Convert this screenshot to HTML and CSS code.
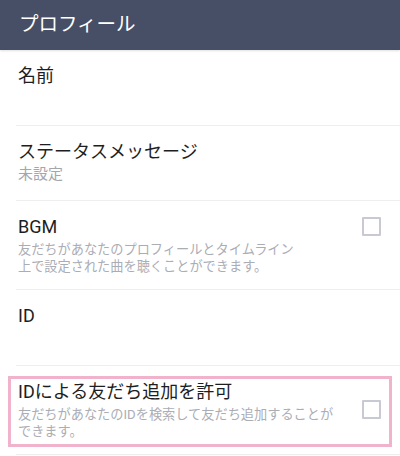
FILE: index.html
```html
<!DOCTYPE html>
<html lang="ja">
<head>
<meta charset="utf-8">
<title>プロフィール</title>
<link rel="stylesheet" href="styles.css">
</head>
<body>
<header class="appbar">
  <h1 class="appbar-title">プロフィール</h1>
</header>
<main class="list">
  <section class="row row-tall">
    <div class="row-text">
      <div class="row-title">名前</div>
    </div>
  </section>
  <section class="row">
    <div class="row-text">
      <div class="row-title">ステータスメッセージ</div>
      <div class="row-value">未設定</div>
    </div>
  </section>
  <section class="row">
    <div class="row-text">
      <div class="row-title">BGM</div>
      <div class="row-desc">友だちがあなたのプロフィールとタイムライン<br>上で設定された曲を聴くことができます。</div>
    </div>
    <span class="checkbox checkbox-top"></span>
  </section>
  <section class="row row-tall">
    <div class="row-text">
      <div class="row-title">ID</div>
    </div>
  </section>
  <section class="row row-highlighted">
    <div class="row-text">
      <div class="row-title">IDによる友だち追加を許可</div>
      <div class="row-desc">友だちがあなたのIDを検索して友だち追加することが<br>できます。</div>
    </div>
    <span class="checkbox checkbox-mid"></span>
    <span class="highlight"></span>
  </section>
</main>
</body>
</html>
```

FILE: styles.css
```css
html, body {
  margin: 0;
  padding: 0;
  background: #ffffff;
}

body {
  width: 400px;
  height: 456px;
  overflow: hidden;
  font-family: Roboto, "Noto Sans CJK JP", sans-serif;
  color: #1e1e22;
}

.appbar {
  height: 50px;
  background: #474f66;
  display: flex;
  align-items: center;
  padding-left: 19px;
  box-shadow: 0 1px 2px rgba(0, 0, 0, 0.12);
  position: relative;
  z-index: 1;
}

.appbar-title {
  margin: 0;
  font-size: 19.5px;
  font-weight: 400;
  color: #ffffff;
  line-height: 24px;
}

.list {
  display: flex;
  flex-direction: column;
}

.row {
  position: relative;
  display: flex;
  align-items: flex-start;
  margin-left: 16px;
  padding: 14px 19px 14px 2px;
  border-bottom: 1px solid #eeeef1;
}

.row-tall {
  min-height: 76px;
  box-sizing: border-box;
}

.row-text {
  flex: 1;
  min-width: 0;
}

.row-title {
  font-size: 18px;
  line-height: 24px;
  color: #1e1e22;
}

.row-value {
  font-size: 15px;
  line-height: 20px;
  color: #a4a6ae;
  margin-bottom: 2px;
}

.row-desc {
  margin-top: 2px;
  font-size: 13.2px;
  line-height: 17px;
  color: #abadb5;
  white-space: nowrap;
}

.checkbox {
  width: 15px;
  height: 15px;
  border: 2px solid #c9c9d3;
  border-radius: 1px;
  flex: none;
}

.checkbox-top {
  margin-top: 2px;
}

.checkbox-mid {
  align-self: center;
  margin-top: -2px;
}

.highlight {
  position: absolute;
  left: -8px;
  top: 10px;
  right: 8px;
  bottom: 7px;
  border: 3px solid #f1b3cb;
  pointer-events: none;
}
```
